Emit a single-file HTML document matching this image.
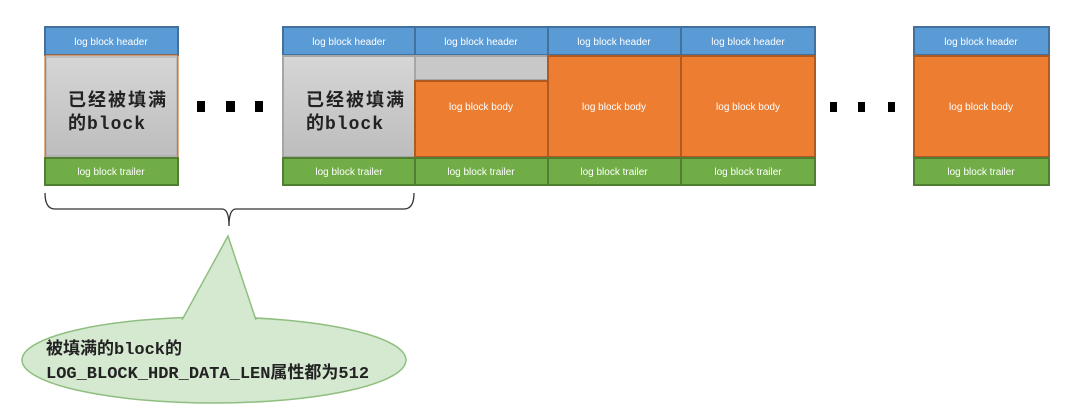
<!DOCTYPE html>
<html><head><meta charset="utf-8"><style>
html,body{margin:0;padding:0;background:#fff;width:1087px;height:418px;overflow:hidden}
svg text{font-family:"Liberation Sans",sans-serif}
.s{font-size:10px;fill:#fff;text-anchor:middle}
.cj{font-family:"Liberation Mono","WenQuanYi Zen Hei","Noto Sans CJK SC",monospace;fill:#222;font-weight:bold}
</style></head><body>
<svg width="1087" height="418" viewBox="0 0 1087 418" xmlns="http://www.w3.org/2000/svg">
<defs>
<linearGradient id="g" x1="0" y1="0" x2="0" y2="1"><stop offset="0" stop-color="#d6d6d6"/><stop offset="1" stop-color="#bdbdbd"/></linearGradient>
</defs>
<g stroke-width="2">
<rect x="45" y="27" width="133" height="28" fill="#5b9bd5" stroke="#41719c"/>
<rect x="45" y="55" width="133" height="103" fill="url(#g)" stroke="#c55a11" stroke-width="1"/>
<rect x="46" y="57" width="131" height="99" fill="url(#g)" stroke="#a6a6a6" stroke-width="1"/>
<rect x="45" y="158" width="133" height="27" fill="#70ad47" stroke="#507e32"/>
<rect x="283" y="27" width="132" height="28" fill="#5b9bd5" stroke="#41719c"/>
<rect x="283" y="56" width="132" height="101" fill="url(#g)" stroke="#a6a6a6"/>
<rect x="283" y="158" width="132" height="27" fill="#70ad47" stroke="#507e32"/>
<rect x="415" y="27" width="133" height="28" fill="#5b9bd5" stroke="#41719c"/>
<rect x="415" y="56" width="133" height="24" fill="#c8c8c8" stroke="#a6a6a6"/>
<rect x="415" y="81" width="133" height="76" fill="#ed7d31" stroke="#ae5a21"/>
<rect x="415" y="158" width="133" height="27" fill="#70ad47" stroke="#507e32"/>
<rect x="548" y="27" width="133" height="28" fill="#5b9bd5" stroke="#41719c"/>
<rect x="548" y="56" width="133" height="101" fill="#ed7d31" stroke="#ae5a21"/>
<rect x="548" y="158" width="133" height="27" fill="#70ad47" stroke="#507e32"/>
<rect x="681" y="27" width="134" height="28" fill="#5b9bd5" stroke="#41719c"/>
<rect x="681" y="56" width="134" height="101" fill="#ed7d31" stroke="#ae5a21"/>
<rect x="681" y="158" width="134" height="27" fill="#70ad47" stroke="#507e32"/>
<rect x="914" y="27" width="135" height="28" fill="#5b9bd5" stroke="#41719c"/>
<rect x="914" y="56" width="135" height="101" fill="#ed7d31" stroke="#ae5a21"/>
<rect x="914" y="158" width="135" height="27" fill="#70ad47" stroke="#507e32"/>
</g>
<g class="s">
<text class="s" x="111" y="45">log block header</text>
<text class="s" x="349" y="45">log block header</text>
<text class="s" x="481" y="45">log block header</text>
<text class="s" x="614" y="45">log block header</text>
<text class="s" x="748" y="45">log block header</text>
<text class="s" x="981" y="45">log block header</text>
<text class="s" x="481" y="110">log block body</text>
<text class="s" x="614" y="110">log block body</text>
<text class="s" x="748" y="110">log block body</text>
<text class="s" x="981" y="110">log block body</text>
<text class="s" x="111" y="175">log block trailer</text>
<text class="s" x="349" y="175">log block trailer</text>
<text class="s" x="481" y="175">log block trailer</text>
<text class="s" x="614" y="175">log block trailer</text>
<text class="s" x="748" y="175">log block trailer</text>
<text class="s" x="981" y="175">log block trailer</text>
</g>
<text class="cj" x="68" y="106" font-size="18" letter-spacing="2">已经被填满</text>
<text class="cj" x="68" y="129" font-size="18" letter-spacing="1">的block</text>
<text class="cj" x="306" y="106" font-size="18" letter-spacing="2">已经被填满</text>
<text class="cj" x="306" y="129" font-size="18" letter-spacing="1">的block</text>
<g fill="#000">
<rect x="197" y="101" width="8" height="11"/><rect x="226" y="101" width="9" height="11"/><rect x="255" y="101" width="8" height="11"/>
<rect x="830" y="102" width="7" height="10"/><rect x="858" y="102" width="7" height="10"/><rect x="888" y="102" width="7" height="10"/>
</g>
<path d="M45 193 Q45 209 55 209 L222 209 Q229 209 229 226 Q229 209 236 209 L404 209 Q414 209 414 193" fill="none" stroke="#333" stroke-width="1.3"/>
<ellipse cx="214" cy="360" rx="192" ry="43" fill="#d5e8d0" stroke="#8fbf80" stroke-width="1.5"/>
<path d="M182 320 L228 236 L256 320" fill="#d5e8d0" stroke="#8fbf80" stroke-width="1.5"/>
<path d="M183 321 L255 321" stroke="#d5e8d0" stroke-width="4"/>
<text class="cj" x="46" y="354" font-size="17">被填满的block的</text>
<text class="cj" x="46" y="378" font-size="17">LOG_BLOCK_HDR_DATA_LEN属性都为512</text>
</svg>
</body></html>
